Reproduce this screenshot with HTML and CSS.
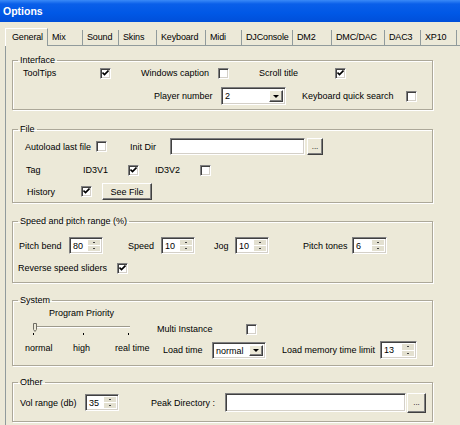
FILE: index.html
```html
<!DOCTYPE html>
<html lang="en">
<head>
  <meta charset="utf-8">
  <meta name="viewport" content="width=device-width, initial-scale=1">
  <title>Options</title>
  <link rel="stylesheet" href="styles.css">
</head>
<body>

  <div class="titlebar">Options</div>

  <div class="tabs">
    <span class="tab tab-on">General</span>
    <span class="tab">Mix</span>
    <span class="tab">Sound</span>
    <span class="tab">Skins</span>
    <span class="tab">Keyboard</span>
    <span class="tab">Midi</span>
    <span class="tab">DJConsole</span>
    <span class="tab">DM2</span>
    <span class="tab">DMC/DAC</span>
    <span class="tab">DAC3</span>
    <span class="tab">XP10</span>
  </div>

  <div class="panel">

    <fieldset class="group g-interface">
      <legend>Interface</legend>
      <div class="row if-1">
        <span class="lbl l-tooltips">ToolTips</span>
        <span class="cb"><svg viewBox="0 0 7 7"><path d="M0.5 2.5l2 2 4-4"/></svg></span>
        <span class="lbl l-caption">Windows caption</span>
        <span class="cb"></span>
        <span class="lbl l-scroll">Scroll title</span>
        <span class="cb"><svg viewBox="0 0 7 7"><path d="M0.5 2.5l2 2 4-4"/></svg></span>
      </div>
      <div class="row if-2">
        <span class="lbl l-player">Player number</span>
        <div class="select s-player"><span>2</span><i class="drop"></i></div>
        <span class="lbl l-kbd">Keyboard quick search</span>
        <span class="cb"></span>
      </div>
    </fieldset>

    <fieldset class="group g-file">
      <legend>File</legend>
      <div class="row fi-1">
        <span class="lbl l-autoload">Autoload last file</span>
        <span class="cb"></span>
        <span class="lbl l-initdir">Init Dir</span>
        <span class="edit e-initdir"></span>
        <span class="btn b-dots">...</span>
      </div>
      <div class="row fi-2">
        <span class="lbl l-tag">Tag</span>
        <span class="lbl l-id3">ID3V1</span>
        <span class="cb"><svg viewBox="0 0 7 7"><path d="M0.5 2.5l2 2 4-4"/></svg></span>
        <span class="lbl l-id3 l-id3v2">ID3V2</span>
        <span class="cb"></span>
      </div>
      <div class="row fi-3">
        <span class="lbl l-history">History</span>
        <span class="cb"><svg viewBox="0 0 7 7"><path d="M0.5 2.5l2 2 4-4"/></svg></span>
        <span class="btn b-seefile">See File</span>
      </div>
    </fieldset>

    <fieldset class="group g-speed">
      <legend>Speed and pitch range (%)</legend>
      <div class="row sp-1">
        <span class="lbl l-pitchbend">Pitch bend</span>
        <div class="spin"><span class="val">80</span><span class="arrows"><i class="up"></i><i class="down"></i></span></div>
        <span class="lbl l-speed">Speed</span>
        <div class="spin"><span class="val">10</span><span class="arrows"><i class="up"></i><i class="down"></i></span></div>
        <span class="lbl l-jog">Jog</span>
        <div class="spin"><span class="val">10</span><span class="arrows"><i class="up"></i><i class="down"></i></span></div>
        <span class="lbl l-tones">Pitch tones</span>
        <div class="spin spin-tones"><span class="val">6</span><span class="arrows"><i class="up"></i><i class="down"></i></span></div>
      </div>
      <div class="row sp-2">
        <span class="lbl l-reverse">Reverse speed sliders</span>
        <span class="cb"><svg viewBox="0 0 7 7"><path d="M0.5 2.5l2 2 4-4"/></svg></span>
      </div>
    </fieldset>

    <fieldset class="group g-system">
      <legend>System</legend>
      <div class="sys">
        <div class="sys-left">
          <div class="prio-title">Program Priority</div>
          <svg class="slider" width="140" height="18" viewBox="0 0 140 18">
            <rect x="20" y="7" width="97" height="1" fill="#9d9a8c"/>
            <rect x="20" y="8" width="97" height="1" fill="#fff"/>
            <rect x="20" y="14" width="1" height="2" fill="#000"/>
            <rect x="70" y="14" width="1" height="2" fill="#000"/>
            <rect x="115" y="14" width="1" height="2" fill="#000"/>
            <path d="M20.5 4.5h3v6l-1.5 2-1.5-2z" fill="#ece9d8" stroke="#6f6d63"/>
          </svg>
          <div class="row prio-labels">
            <span class="lbl l-normal">normal</span>
            <span class="lbl l-high">high</span>
            <span class="lbl">real time</span>
          </div>
        </div>
        <div class="sys-right">
          <div class="row sy-1">
            <span class="lbl l-multi">Multi Instance</span>
            <span class="cb"></span>
          </div>
          <div class="row sy-2">
            <span class="lbl l-loadtime">Load time</span>
            <div class="select s-load"><span>normal</span><i class="drop"></i></div>
            <span class="lbl l-memory">Load memory time limit</span>
            <div class="spin spin-mem"><span class="val">13</span><span class="arrows"><i class="up"></i><i class="down"></i></span></div>
          </div>
        </div>
      </div>
    </fieldset>

    <fieldset class="group g-other">
      <legend>Other</legend>
      <div class="row ot-1">
        <span class="lbl l-vol">Vol range (db)</span>
        <div class="spin spin-vol"><span class="val">35</span><span class="arrows"><i class="up"></i><i class="down"></i></span></div>
        <span class="lbl l-peak">Peak Directory :</span>
        <span class="edit e-peak"></span>
        <span class="btn b-peak">...</span>
      </div>
    </fieldset>

  </div>

</body>
</html>
```

FILE: styles.css
```css
* {
  box-sizing: border-box;
}

body {
  margin: 0;
  width: 460px;
  height: 425px;
  overflow: hidden;
  background: #ece9d8;
  font-family: "Liberation Sans", Arial, sans-serif;
  font-size: 9px;
  color: #000;
}

/* title bar */
.titlebar {
  height: 22px;
  padding-left: 3px;
  line-height: 22px;
  font-size: 10.5px;
  font-weight: bold;
  color: #fff;
  background: linear-gradient(#3a8af7, #0a5fe9 4px, #0058e6 60%, #004fd9);
}

/* tabs */
.tabs {
  display: grid;
  grid-template-columns: 43px 35px 36px 38px 49px 36px 51px 39px 53px 36px 36px;
  align-items: end;
  height: 17px;
  margin: 6px 0 0 5px;
}
.tab {
  height: 15px;
  line-height: 14px;
  padding-left: 4px;
  letter-spacing: -0.15px;
  white-space: nowrap;
  border-right: 1px solid #919b9c;
}
.tab-on {
  height: 18px;
  margin-bottom: -1px;
  padding-left: 6px;
  line-height: 16px;
  background: #ece9d8;
  border-left: 1px solid #fff;
  border-top: 1px solid #fff;
  position: relative;
  z-index: 1;
}

.panel {
  height: 400px;
  margin-left: 5px;
  padding: 0 0 0 6px;
  border-left: 1px solid #919b9c;
  border-top: 1px solid #919b9c;
}

/* group boxes */
.group {
  width: 421px;
  min-inline-size: 0;
  margin: 0;
  padding: 0 0 4px;
  border: 1px solid #aca899;
  box-shadow: inset 1px 1px #fff, 1px 1px #fff;
}
.group legend {
  margin-left: 5px;
  padding: 0 2px;
  line-height: 12px;
}
.g-interface { margin-top: 8px; }
.g-file { margin-top: 13px; padding-bottom: 2px; }
.g-speed { margin-top: 12px; padding-bottom: 8px; }
.g-system { margin-top: 11px; padding-bottom: 4px; }
.g-other { margin-top: 10px; padding-bottom: 8px; }

.row {
  display: flex;
  align-items: center;
}
.lbl {
  flex: none;
  white-space: nowrap;
}

/* controls */
.cb {
  flex: none;
  display: flex;
  align-items: center;
  justify-content: center;
  width: 11px;
  height: 11px;
  background: #fff;
  border: 1px solid;
  border-color: #808080 #fff #fff #808080;
  box-shadow: inset 1px 1px #404040, inset -1px -1px #d4d0c8;
}
.cb svg {
  width: 7px;
  height: 7px;
  fill: none;
  stroke: #000;
  stroke-width: 1.6;
}

.edit,
.select,
.spin {
  flex: none;
  background: #fff;
  border: 1px solid;
  border-color: #808080 #fff #fff #808080;
  box-shadow: inset 1px 1px #404040, inset -1px -1px #d4d0c8;
}

.select {
  display: flex;
  padding: 2px;
}
.select span {
  flex: 1;
  padding-left: 1px;
  line-height: 12px;
}
.drop {
  width: 14px;
  background: #ece9d8;
  border: 1px solid;
  border-color: #fff #404040 #404040 #fff;
  box-shadow: inset -1px -1px #808080;
  display: flex;
  align-items: center;
  justify-content: center;
}
.drop::after {
  content: "";
  border-left: 3px solid transparent;
  border-right: 3px solid transparent;
  border-top: 3px solid #000;
}

.spin {
  display: flex;
  height: 17px;
  width: 34px;
  padding: 2px;
}
.spin .val {
  flex: 1;
  line-height: 13px;
  padding-left: 1px;
}
.arrows {
  width: 12px;
  display: flex;
  flex-direction: column;
  gap: 1px;
}
.arrows i {
  flex: 1;
  background: #e3e0d0;
  display: flex;
  align-items: center;
  justify-content: center;
}
.arrows i::after {
  content: "";
  width: 2px;
  height: 1px;
  background: #444;
}

.btn {
  flex: none;
  display: flex;
  align-items: center;
  justify-content: center;
  background: #ece9d8;
  border: 1px solid;
  border-color: #fff #404040 #404040 #fff;
  box-shadow: inset -1px -1px #808080;
}

/* interface */
.if-1 { height: 14px; }
.if-2 { height: 18px; margin-top: 7px; }
.l-tooltips { margin-left: 10px; width: 77px; }
.l-caption { margin-left: 30px; width: 77px; }
.l-scroll { margin-left: 30px; width: 76px; }
.l-player { margin-left: 141px; width: 67px; }
.s-player { width: 65px; height: 18px; }
.l-kbd { margin-left: 16px; width: 104px; }

/* file */
.fi-1 { height: 17px; margin-top: 3px; }
.fi-2 { height: 14px; margin-top: 8px; }
.fi-3 { height: 17px; margin-top: 6px; }
.l-autoload { margin-left: 12px; width: 71px; }
.l-initdir { margin-left: 23px; width: 40px; }
.e-initdir { width: 135px; height: 17px; }
.b-dots { margin-left: 2px; width: 16px; height: 17px; font-size: 8px; }
.l-tag { margin-left: 13px; width: 57px; }
.l-id3 { width: 45px; }
.l-id3v2 { margin-left: 16px; }
.l-history { margin-left: 14px; width: 54px; }
.b-seefile { margin-left: 10px; width: 50px; height: 17px; }

/* speed */
.sp-1 { height: 17px; margin-top: 10px; }
.sp-2 { height: 12px; margin-top: 8px; }
.l-pitchbend { margin-left: 6px; width: 50px; }
.l-speed { margin-left: 25px; width: 33px; }
.l-jog { margin-left: 19px; width: 21px; }
.l-tones { margin-left: 34px; width: 49px; }
.spin-tones { width: 35px; }
.l-reverse { margin-left: 5px; width: 99px; }

/* system */
.sys {
  display: flex;
}
.sys-left {
  width: 144px;
  flex: none;
}
.prio-title {
  margin: 1px 0 0 36px;
  line-height: 12px;
}
.slider {
  display: block;
}
.prio-labels {
  height: 12px;
  margin-top: 5px;
}
.l-normal { margin-left: 12px; width: 48px; }
.l-high { width: 42px; }
.sy-1 { height: 14px; margin-top: 16px; }
.sy-2 { height: 22px; margin-top: 3px; }
.l-multi { width: 89px; }
.l-loadtime { margin-left: 6px; width: 49px; }
.s-load { width: 54px; height: 17px; }
.l-memory { margin-left: 16px; width: 98px; }
.spin-mem { width: 37px; height: 18px; }

/* other */
.ot-1 { height: 21px; margin-top: 4px; }
.l-vol { margin-left: 7px; width: 65px; }
.spin-vol { width: 34px; }
.l-peak { margin-left: 32px; width: 74px; }
.e-peak { width: 181px; height: 19px; }
.b-peak { margin-left: 1px; width: 19px; height: 20px; font-size: 8px; }
```
